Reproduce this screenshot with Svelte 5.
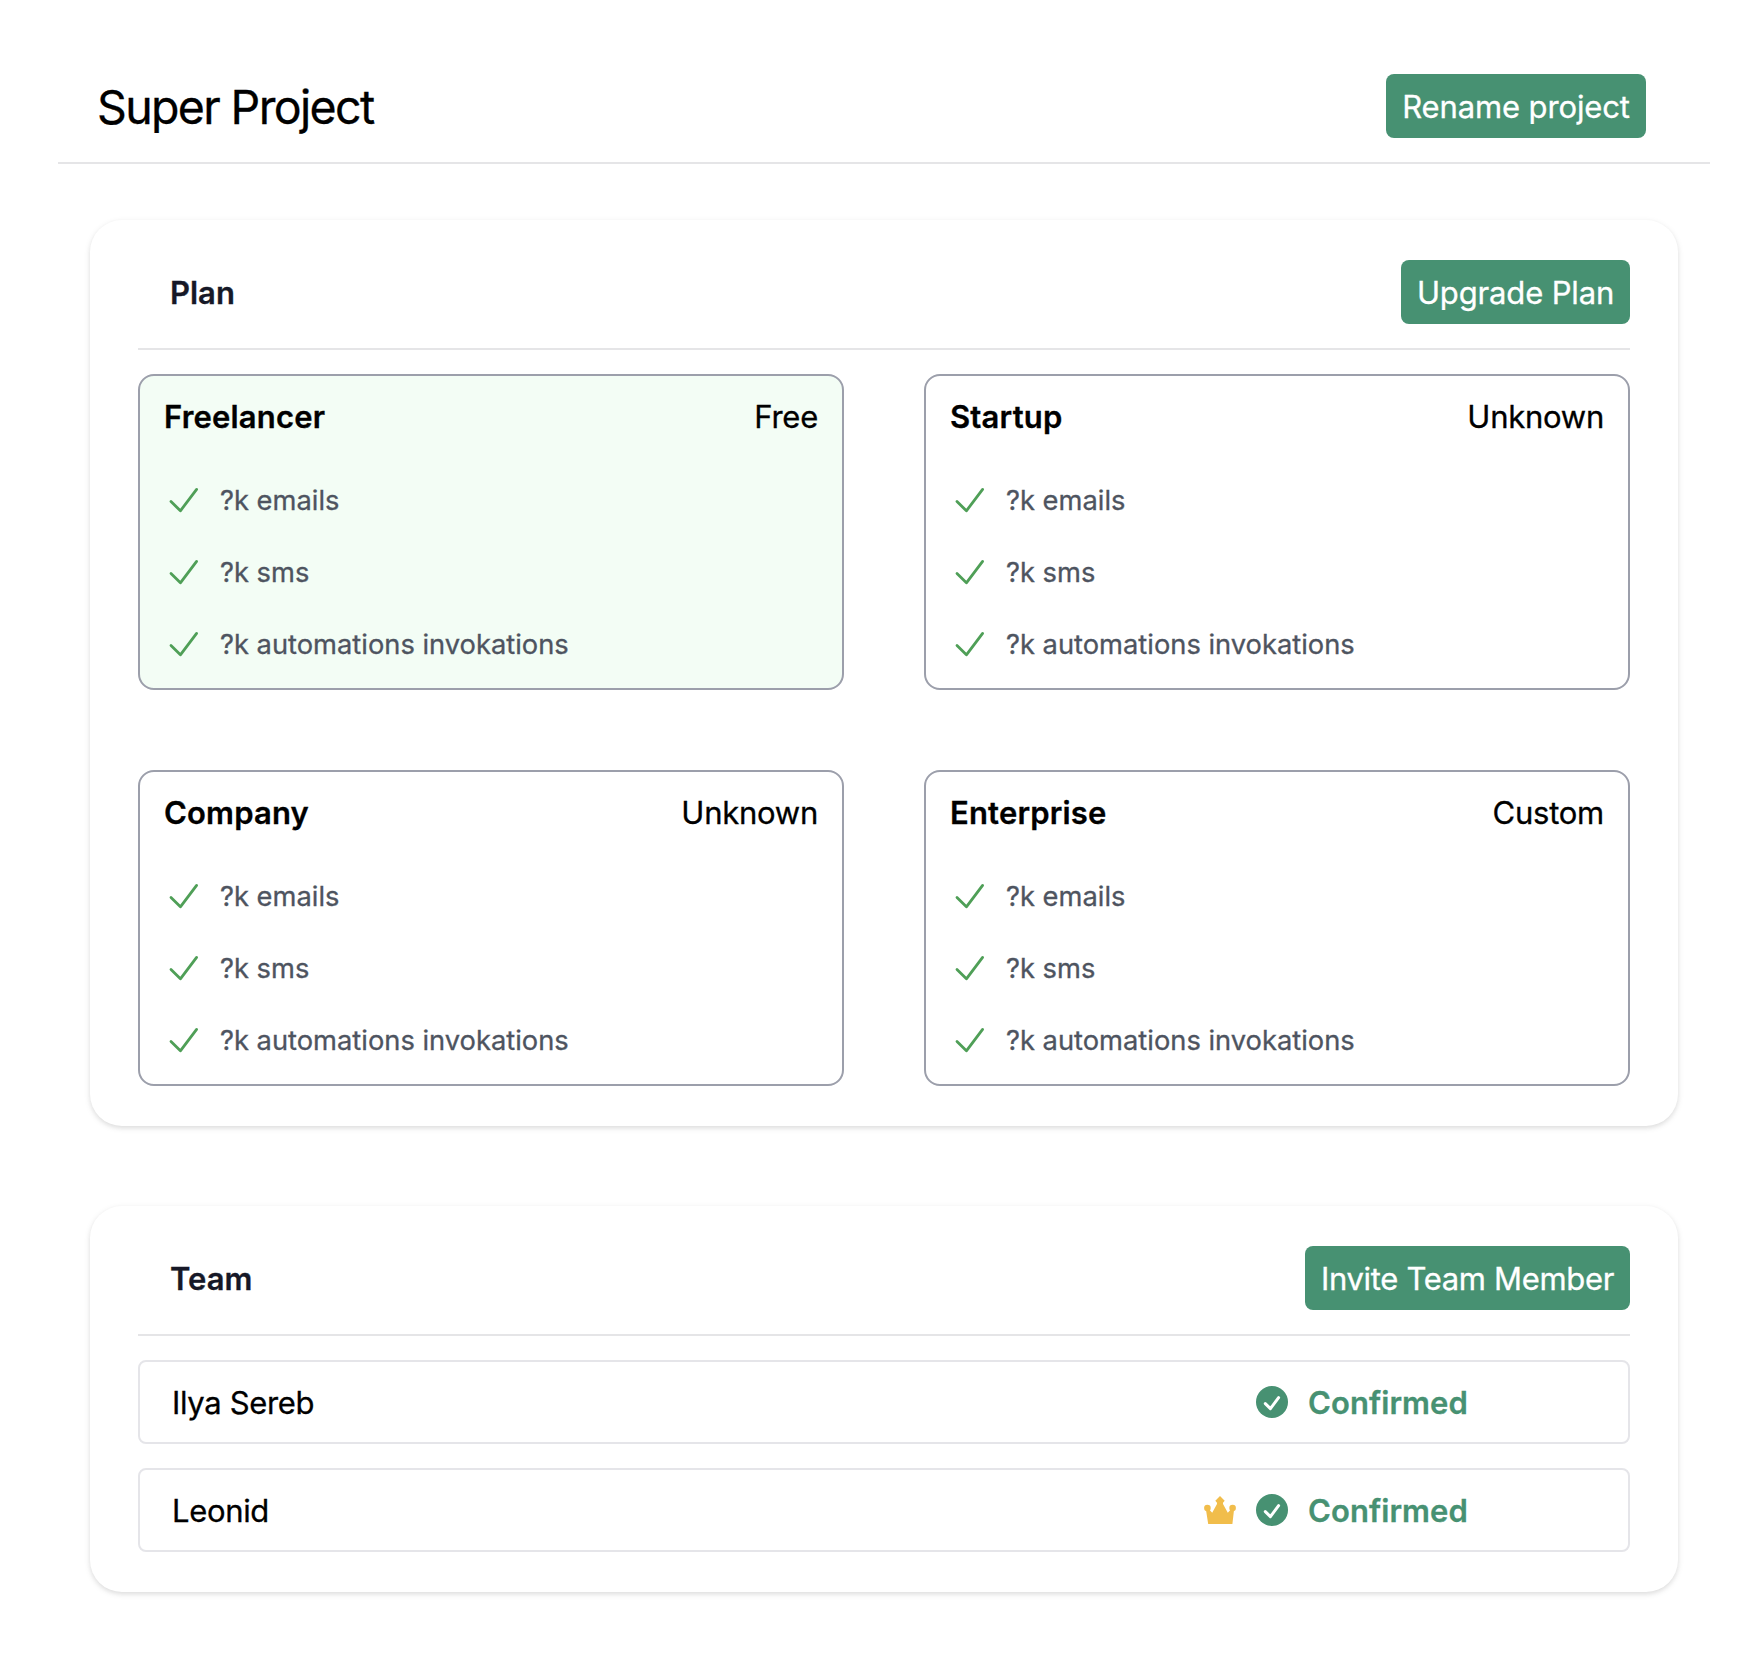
<script lang="ts">
  const features = ['?k emails', '?k sms', '?k automations invokations'];

  const plans = [
    { name: 'Freelancer', price: 'Free', current: true },
    { name: 'Startup', price: 'Unknown', current: false },
    { name: 'Company', price: 'Unknown', current: false },
    { name: 'Enterprise', price: 'Custom', current: false }
  ];

  const members = [
    { name: 'Ilya Sereb', owner: false },
    { name: 'Leonid', owner: true }
  ];
</script>

<main>
  <header class="page-head">
    <h1>Super Project</h1>
    <button class="rename">Rename project</button>
  </header>

  <section class="card">
    <div class="card-head">
      <h2>Plan</h2>
      <button class="upgrade">Upgrade Plan</button>
    </div>
    <div class="plans">
      {#each plans as plan}
        <article class="plan" class:current={plan.current}>
          <div class="plan-head">
            <h3>{plan.name}</h3>
            <span class="price">{plan.price}</span>
          </div>
          <ul>
            {#each features as feature}
              <li>
                <svg class="tick" viewBox="0 0 36 36" fill="none" aria-hidden="true">
                  <path d="M7 19.6 16.4 28.8 32.6 7.4" />
                </svg>
                <span class="feature">{feature}</span>
              </li>
            {/each}
          </ul>
        </article>
      {/each}
    </div>
  </section>

  <section class="card">
    <div class="card-head">
      <h2>Team</h2>
      <button class="invite">Invite Team Member</button>
    </div>
    <div class="members">
      {#each members as member}
        <div class="member">
          <span class="member-name">{member.name}</span>
          {#if member.owner}
            <svg class="icon" viewBox="0 0 32 32" aria-hidden="true">
              <g fill="#f1bd4b">
                <path d="M16 2 20.7 6.8 19 8.8V10L23.8 18.8 27 15.2 30 16 28.4 30H4.2L2 16 5 15.2 8.2 18.8 13 10V8.8L11.3 6.8Z" />
                <circle cx="3.4" cy="14" r="3.3" />
                <circle cx="28.6" cy="14" r="3.3" />
              </g>
            </svg>
          {/if}
          <svg class="icon" viewBox="0 0 32 32" aria-hidden="true">
            <circle cx="16" cy="16" r="16" fill="#479172" />
            <path d="M9.3 17.6 14.4 22.6 22.6 11.6" fill="none" stroke="#fff" stroke-width="3" stroke-linecap="round" stroke-linejoin="round" />
          </svg>
          <span class="status">Confirmed</span>
        </div>
      {/each}
    </div>
  </section>
</main>

<style>
  :global(body) {
    background: #fff;
  }

  main {
    box-sizing: border-box;
    padding: 50px 34px 62px 58px;
    font-family: Inter, 'Liberation Sans', sans-serif;
    font-size: 31px;
    line-height: 48px;
    color: #000;
    -webkit-text-stroke: 0.3px currentColor;
  }

  h1, h2, h3, ul {
    margin: 0;
    padding: 0;
    font-size: inherit;
  }

  .page-head {
    display: flex;
    align-items: center;
    justify-content: space-between;
    padding: 24px 64px 24px 39px;
    border-bottom: 2px solid #e5e5e7;
  }

  h1 {
    font-size: 46.5px;
    font-weight: 400;
    letter-spacing: -1.65px;
    line-height: 62px;
    padding-top: 2px;
  }

  button {
    box-sizing: border-box;
    height: 64px;
    padding: 1px 0 0;
    border: 0;
    border-radius: 8px;
    background: #479172;
    color: #fff;
    font: inherit;
    text-align: center;
    white-space: nowrap;
  }

  .rename {
    width: 260px;
    letter-spacing: -0.12px;
  }

  .upgrade {
    width: 229px;
    letter-spacing: -0.15px;
  }

  .invite {
    width: 325px;
    letter-spacing: -0.32px;
  }

  .card {
    margin: 56px 32px 0;
    padding: 40px 48px;
    border-radius: 32px;
    background: #fff;
    box-shadow: 0 2px 6px rgba(0, 0, 0, 0.1), 0 2px 4px rgba(0, 0, 0, 0.05);
  }

  .card + .card {
    margin-top: 80px;
  }

  .card-head {
    display: flex;
    align-items: center;
    justify-content: space-between;
    padding: 0 0 24px 32px;
    margin-bottom: 24px;
    border-bottom: 2px solid #e5e5e7;
  }

  h2 {
    font-weight: 600;
    color: #161827;
    padding-top: 1px;
  }

  .plans {
    display: grid;
    grid-template-columns: 1fr 1fr;
    gap: 80px;
  }

  .plan {
    padding: 16px 24px 8px;
    border: 2px solid #9c9fab;
    border-radius: 16px;
  }

  .current {
    background: #f3fdf5;
  }

  .plan-head {
    display: flex;
    justify-content: space-between;
    padding-top: 1px;
    margin-bottom: 23px;
  }

  h3 {
    font-weight: 600;
    letter-spacing: 0.18px;
  }

  .price {
    letter-spacing: -0.25px;
  }

  ul {
    list-style: none;
  }

  li {
    display: flex;
    align-items: center;
    height: 72px;
    gap: 20px;
    font-size: 27.3px;
    color: #4e5460;
  }

  .feature {
    padding-top: 2px;
  }

  .tick {
    width: 36px;
    height: 36px;
    stroke: #4f9f57;
    stroke-width: 2.8;
    stroke-linecap: round;
    stroke-linejoin: round;
  }

  .members {
    display: grid;
    gap: 24px;
  }

  .member {
    display: flex;
    align-items: center;
    gap: 20px;
    height: 80px;
    padding-left: 32px;
    border: 2px solid #e5e5e9;
    border-radius: 8px;
  }

  .member-name {
    flex: 1;
    padding-top: 1px;
    letter-spacing: -0.34px;
  }

  .icon {
    width: 32px;
    height: 32px;
  }

  .status {
    width: 320px;
    padding-top: 1px;
    font-weight: 600;
    letter-spacing: 0.08px;
    color: #479172;
  }
</style>
